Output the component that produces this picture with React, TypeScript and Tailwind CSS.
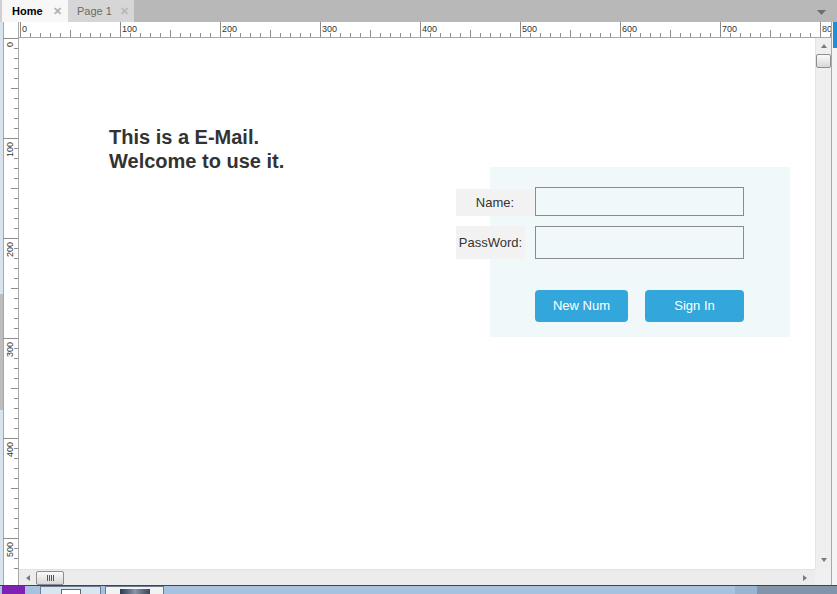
import React from "react";

const FONT = "font-['Liberation_Sans',Arial,sans-serif]";

function TopRuler() {
  const ticks = [];
  for (let n = 0; n <= 810; n += 10) {
    const x = n + 1.5;
    const major = n % 100 === 0;
    const mid = n % 50 === 0;
    ticks.push(
      <line key={n} x1={x} x2={x} y1={major ? 0 : mid ? 8 : 11} y2={15} stroke="#8c8c8c" strokeWidth={1} />
    );
    if (major) {
      ticks.push(
        <text key={"t" + n} x={x + 1.5} y={10} fontSize={9} fill="#333" fontFamily="Liberation Sans, Arial, sans-serif">
          {n}
        </text>
      );
    }
  }
  return (
    <svg width="812" height="16" className="block">
      <rect width="812" height="16" fill="#fff" />
      {ticks}
      <line x1={0} x2={812} y1={15.5} y2={15.5} stroke="#a8a8a8" />
    </svg>
  );
}

function LeftRuler() {
  const ticks = [];
  for (let n = 0; n <= 530; n += 10) {
    const y = n + 0.5;
    const major = n % 100 === 0;
    const mid = n % 50 === 0;
    ticks.push(
      <line key={n} y1={y} y2={y} x1={major ? 0 : mid ? 8 : 11} x2={15} stroke="#8c8c8c" strokeWidth={1} />
    );
    if (major) {
      ticks.push(
        <text
          key={"t" + n}
          transform={`translate(9.5 ${n + 4}) rotate(-90)`}
          textAnchor="end"
          fontSize={9}
          fill="#333"
          fontFamily="Liberation Sans, Arial, sans-serif"
        >
          {n}
        </text>
      );
    }
  }
  return (
    <svg width="16" height="531" className="block">
      <rect width="16" height="531" fill="#fff" />
      <line x1={0.5} x2={0.5} y1={0} y2={531} stroke="#a8a8a8" />
      <line x1={15.5} x2={15.5} y1={0} y2={531} stroke="#a8a8a8" />
      {ticks}
    </svg>
  );
}

function Tri({ dir, className }: { dir: "up" | "down" | "left" | "right"; className?: string }) {
  const pts = {
    up: "3,0 6,4 0,4",
    down: "0,0 6,0 3,4",
    left: "4,0 4,6 0,3",
    right: "0,0 4,3 0,6",
  }[dir];
  const w = dir === "up" || dir === "down" ? 6 : 4;
  const h = dir === "up" || dir === "down" ? 4 : 6;
  return (
    <svg width={w} height={h} className={className}>
      <polygon points={pts} fill="#7a7a7a" />
    </svg>
  );
}

export default function App() {
  return (
    <div className={`w-[837px] h-[594px] flex flex-col overflow-hidden bg-white ${FONT}`}>
      {/* Tabs */}
      <div className="h-[22px] shrink-0 flex items-stretch bg-[#b8b8b8]">
        <div className="w-[68px] flex items-center bg-[#f7f7f7] border-l-2 border-[#d0d0d0] pl-[10px]">
          <span className="text-[11px] font-bold text-black">Home</span>
          <span className="ml-[10px] text-[11px] font-bold text-[#b0b0b0]">✕</span>
        </div>
        <div className="w-[66px] flex items-center bg-[#d6d6d6] pl-[9px]">
          <span className="text-[11px] text-[#6a6a6a]">Page 1</span>
          <span className="ml-[8px] text-[11px] font-bold text-[#b8b8b8]">✕</span>
        </div>
        <div className="flex-1 flex items-center justify-end pr-[11px] pt-[2px]">
          <svg width="9" height="5">
            <polygon points="0,0 9,0 4.5,5" fill="#6e6e6e" />
          </svg>
        </div>
      </div>

      <div className="flex flex-1 min-h-0">
        {/* left edge strip */}
        <div className="w-[3px] flex flex-col bg-[#d8e3ee]">
          <div className="h-[272px]" />
          <div className="h-[116px] bg-[#bdbdbd]" />
        </div>

        <div className="w-[828px] flex flex-col">
          {/* ruler row */}
          <div className="h-[16px] flex">
            <div className="w-[16px] bg-white border-l border-r border-[#a8a8a8]" />
            <TopRuler />
          </div>

          {/* body */}
          <div className="flex flex-1 min-h-0">
            <LeftRuler />
            <div className="relative w-[796px] bg-white overflow-hidden">
              <div className="absolute left-[90px] top-[87px] text-[20px] leading-[24px] font-bold text-[#333333]">
                <p>This is a E-Mail.</p>
                <p>Welcome to use it.</p>
              </div>

              <div className="absolute left-[471px] top-[129px] w-[300px] h-[170px] bg-[#f0f8fa]" />

              <div className="absolute left-[437px] top-[151px] w-[78px] h-[27px] bg-[#f2f2f2] flex items-center justify-center text-[13px] text-[#333]">
                Name:
              </div>
              <div className="absolute left-[516px] top-[149px] w-[209px] h-[29px] border border-[#868c8f] bg-[#f0f8fa]" />

              <div className="absolute left-[437px] top-[188px] w-[69px] h-[33px] bg-[#f2f2f2] flex items-center justify-center text-[13px] text-[#333]">
                PassWord:
              </div>
              <div className="absolute left-[516px] top-[188px] w-[209px] h-[33px] border border-[#868c8f] bg-[#f0f8fa]" />

              <button className="absolute left-[516px] top-[252px] w-[93px] h-[32px] rounded-[4px] bg-[#33a7db] text-white text-[13px]">
                New Num
              </button>
              <button className="absolute left-[626px] top-[252px] w-[99px] h-[32px] rounded-[4px] bg-[#33a7db] text-white text-[13px]">
                Sign In
              </button>
            </div>

            {/* vertical scrollbar */}
            <div className="w-[16px] flex flex-col items-center bg-[#efefef] border-l border-[#e4e4e4]">
              <Tri dir="up" className="mt-[6px]" />
              <div className="mt-[6px] w-[15px] h-[14px] rounded-[2px] border border-[#8e8e8e] bg-gradient-to-b from-[#fafafa] to-[#d8d8d8]" />
              <div className="flex-1" />
              <Tri dir="down" className="mb-[7px]" />
            </div>
          </div>

          {/* horizontal scrollbar row */}
          <div className="h-[16px] flex">
            <div className="w-[16px] bg-white border-l border-r border-[#a8a8a8]" />
            <div className="w-[796px] flex items-center bg-[#ececec] border-t border-[#e2e2e2]">
              <Tri dir="left" className="ml-[7px]" />
              <div className="ml-[6px] w-[28px] h-[14px] rounded-[2px] border border-[#8e8e8e] bg-gradient-to-b from-[#fafafa] to-[#d8d8d8] flex items-center justify-center gap-[1px]">
                <div className="w-[1px] h-[6px] bg-[#555]" />
                <div className="w-[1px] h-[6px] bg-[#555]" />
                <div className="w-[1px] h-[6px] bg-[#555]" />
                <div className="w-[1px] h-[6px] bg-[#555]" />
              </div>
              <div className="flex-1" />
              <Tri dir="right" className="mr-[8px]" />
            </div>
            <div className="w-[16px] bg-[#f0f0f0]" />
          </div>
        </div>

        {/* right edge strip */}
        <div className="w-[6px] flex flex-col border-l border-[#a8a8a8] bg-[#f4f4f4]">
          <div className="h-[26px] ml-[1px] bg-[#1f8fd6]" />
        </div>
      </div>

      {/* taskbar */}
      <div className="h-[9px] shrink-0 flex flex-col">
        <div className="h-[1px] bg-[#3d4654]" />
        <div className="flex-1 flex bg-[#a6c2df]">
          <div className="ml-[2px] w-[23px] bg-[#7d22b3]" />
          <div className="ml-[15px] w-[61px] border border-b-0 border-[#6b7c92] bg-[#d9e5f1] flex justify-center">
            <div className="mt-[2px] w-[20px] bg-white border border-b-0 border-[#666]" />
          </div>
          <div className="ml-[4px] w-[59px] border border-b-0 border-[#6b7c92] bg-[#f2f2f2] flex justify-center">
            <div className="mt-[2px] w-[30px] bg-gradient-to-r from-[#2c3a52] via-[#8896a8] to-[#3a4658]" />
          </div>
          <div className="flex-1" />
          <div className="w-[22px] bg-[#9ab3ce]" />
          <div className="w-[80px] bg-[#8294aa]" />
        </div>
      </div>
    </div>
  );
}
